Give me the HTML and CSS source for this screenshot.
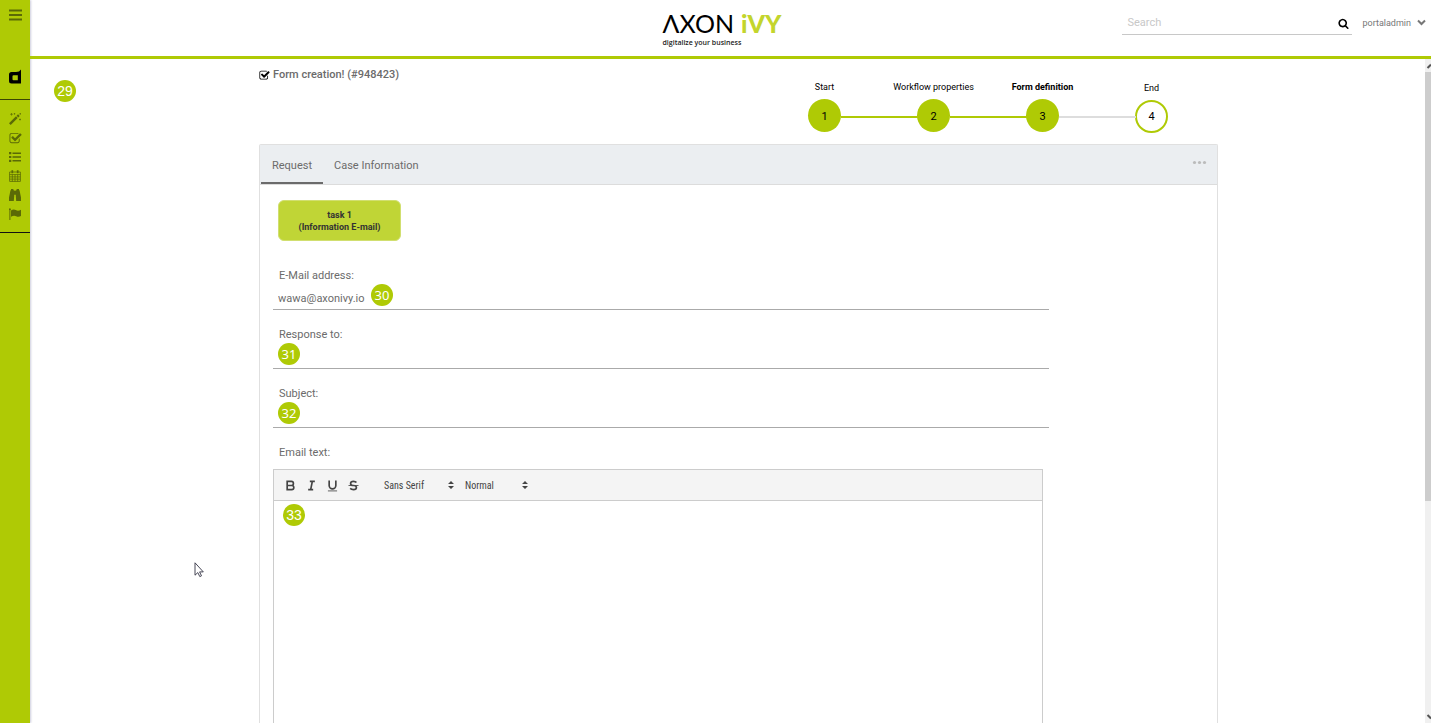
FILE: index.html
```
<!DOCTYPE html>
<html lang="en">
<head>
<meta charset="utf-8">
<title>Form creation</title>
<link rel="stylesheet" href="styles.css">
</head>
<body>
<div class="app">
  <nav class="sidebar" aria-label="Main">
    <button class="side-btn menu" type="button" aria-label="Menu">
      <svg width="14" height="12" viewBox="0 0 14 12"><path d="M1 1.500h13M1 6h13M1 10.500h13" stroke="currentColor" stroke-width="2"/></svg>
    </button>
    <a class="brand-mark" href="#" aria-label="Dashboard">
      <svg width="14" height="16" viewBox="0 0 14 16"><path fill="#000" fill-rule="evenodd" d="M13 .500V14.500H3.500Q1 14.500 1 12V5.500Q1 3 3.500 3H8Q11.500 3 13 .500zM5.500 6.200Q4.500 6.200 4.500 7.200V10.300Q4.500 11.300 5.500 11.300H9.800V6.200z"/></svg>
    </a>
    <div class="side-links">
      <a class="side-btn" href="#" aria-label="Processes"><svg width="12" height="12" viewBox="0 0 12 12"><path d="M0 10.300L7 3.300 8.700 5 1.700 12z" fill="currentColor"/><path d="M7.600 2.700L9 1.300 10.700 3 9.300 4.400z" fill="currentColor"/><path d="M2.500 0v2.600M1.200 1.300h2.600M5.500 0v1.600M4.700.8h1.600M11.300 0v1.600M10.500.8H12M11 5.500v2M10 6.500h2" stroke="currentColor" stroke-width=".7"/></svg></a>
      <a class="side-btn" href="#" aria-label="Tasks"><svg width="13" height="13" viewBox="0 0 1792 1792"><use href="#check"/></svg></a>
      <a class="side-btn" href="#" aria-label="Cases"><svg width="12" height="10" viewBox="0 0 12 10"><path d="M3.500 1.200H12M3.500 5H12M3.500 8.800H12" stroke="currentColor" stroke-width="1.500"/><path d="M0 1.200h2.300M0 5h2.300M0 8.800h2.300" stroke="currentColor" stroke-width="2.200"/></svg></a>
      <a class="side-btn" href="#" aria-label="Calendar"><svg width="12" height="12" viewBox="0 0 12 12"><path d="M.6 2h10.800v9.400H.6zM.6 4.600h10.800M.6 6.900h10.800M.6 9.100h10.800M3.300 4.500v7M6 4.500v7M8.700 4.500v7" fill="none" stroke="currentColor" stroke-width=".8"/><path d="M3.300.2v3M8.700.2v3" stroke="currentColor" stroke-width="1.700"/></svg></a>
      <a class="side-btn" href="#" aria-label="Search"><svg width="12" height="12" viewBox="0 0 12 12"><path d="M2 0h2.400v1.200H5.200V7L4.800 12H0V8.500L1.500 1.200H2zM7.600 0H10v1.200h.5L12 8.500V12H7.200L6.800 7V1.200h.8zM5 1.800h2v4H5z" fill="currentColor"/></svg></a>
      <a class="side-btn" href="#" aria-label="Flags"><svg width="12" height="12" viewBox="0 0 12 12"><path d="M.9 1v11" stroke="currentColor"/><circle cx=".9" cy="1.200" r=".9" fill="currentColor"/><path d="M2 2.600Q4.500.8 6.800 2.100T12 1.800V8Q9.500 9.500 7.200 8.200T2 8.800z" fill="currentColor"/></svg></a>
    </div>
  </nav>

  <header class="topbar">
    <div class="logo">
      <div class="logo-name"><span class="logo-axon">ΛXON</span><span class="logo-ivy">iVY</span></div>
      <div class="logo-tag">digitalize your business</div>
    </div>
    <div class="tools">
      <form class="search">
        <input type="text" aria-label="Search" placeholder="Search">
        <button type="button" aria-label="Run search"><svg width="11" height="11" viewBox="0 0 1792 1792"><path fill="currentColor" d="M1216 832q0-185-131.500-316.500t-316.500-131.500-316.500 131.500-131.500 316.500 131.500 316.500 316.500 131.500 316.500-131.500 131.500-316.500zm512 832q0 52-38 90t-90 38q-54 0-90-38l-343-342q-179 124-399 124-143 0-273.500-55.500t-225-150-150-225-55.500-273.500 55.500-273.500 150-225 225-150 273.500-55.500 273.500 55.500 225 150 150 225 55.500 273.500q0 220-124 399l343 343q37 37 37 90z"/></svg></button>
      </form>
      <button class="user" type="button">portaladmin
        <svg width="9" height="7" viewBox="0 0 9 7"><path d="M1 1.500L4.500 5 8 1.500" fill="none" stroke="currentColor" stroke-width="2"/></svg>
      </button>
    </div>
  </header>

  <div class="stage">
    <span class="note note-page">29</span>
    <main class="content">
      <div class="head">
        <h1 class="title"><svg width="11" height="11" viewBox="0 0 1792 1792"><path id="check" fill="currentColor" d="M1472 930v318q0 119-84.500 203.500t-203.500 84.500h-832q-119 0-203.500-84.500t-84.500-203.500v-832q0-119 84.500-203.500t203.500-84.500h832q63 0 117 25 15 7 18 23 3 17-9 29l-49 49q-10 10-23 10-3 0-9-2-23-6-45-6h-832q-66 0-113 47t-47 113v832q0 66 47 113t113 47h832q66 0 113-47t47-113v-254q0-13 9-22l64-64q10-10 23-10 6 0 12 3 20 8 20 29zm231-489l-814 814q-24 24-57 24t-57-24l-430-430q-24-24-24-57t24-57l110-110q24-24 57-24t57 24l263 263 647-647q24-24 57-24t57 24l110 110q24 24 24 57t-24 57z"/></svg>Form creation! (#948423)</h1>
        <ol class="steps">
          <li class="step"><span>Start</span><b class="dot">1</b></li>
          <li class="step linked"><span>Workflow properties</span><b class="dot">2</b></li>
          <li class="step linked current"><span>Form definition</span><b class="dot">3</b></li>
          <li class="step linked open"><span>End</span><b class="dot">4</b></li>
        </ol>
      </div>

      <section class="panel">
        <div class="tabs">
          <button class="tab active" type="button">Request</button>
          <button class="tab" type="button">Case Information</button>
          <button class="more" type="button" aria-label="More"><svg width="15" height="5" viewBox="0 0 15 5"><circle cx="2.500" cy="2.500" r="1.600"/><circle cx="7.500" cy="2.500" r="1.600"/><circle cx="12.500" cy="2.500" r="1.600"/></svg></button>
        </div>
        <form class="form">
          <button class="task" type="button">task 1<br>(Information E-mail)</button>
          <div class="field">
            <label for="mail">E-Mail address:</label>
            <input id="mail" type="text" value="wawa@axonivy.io">
            <span class="note note-mail">30</span>
          </div>
          <div class="field">
            <label for="reply">Response to:</label>
            <input id="reply" type="text">
            <span class="note note-field">31</span>
          </div>
          <div class="field">
            <label for="subject">Subject:</label>
            <input id="subject" type="text">
            <span class="note note-field">32</span>
          </div>
          <label class="editor-label" for="body">Email text:</label>
          <div class="editor">
            <div class="toolbar">
              <button type="button" aria-label="Bold"><svg width="15" height="15" viewBox="0 0 18 18"><path d="M5 4h5a2.500 2.500 0 0 1 0 5H5zM5 9h5.500a2.500 2.500 0 0 1 0 5H5z"/></svg></button>
              <button type="button" aria-label="Italic"><svg width="15" height="15" viewBox="0 0 18 18"><path d="M7 4h6M5 14h6M8 14l2-10"/></svg></button>
              <button type="button" aria-label="Underline"><svg width="15" height="15" viewBox="0 0 18 18"><path d="M5 3v6a4 4 0 0 0 8 0V3"/><path d="M3.500 15.500h11" stroke-width="1"/></svg></button>
              <button type="button" aria-label="Strike"><svg width="15" height="15" viewBox="0 0 18 18"><path d="M3 9h12" stroke-width="1"/><path d="M12.500 5.500Q11.500 4 9 4 5.500 4 5.500 6.500T9 9t3.500 2.500T9 14q-2.500 0-4-1.500"/></svg></button>
              <span class="pick pick-font"><select aria-label="Font"><option>Sans Serif</option></select><svg width="6" height="8" viewBox="0 0 6 8"><path d="M3 0l3 3H0zM0 5h6L3 8z"/></svg></span>
              <span class="pick pick-size"><select aria-label="Size"><option>Normal</option></select><svg width="6" height="8" viewBox="0 0 6 8"><path d="M3 0l3 3H0zM0 5h6L3 8z"/></svg></span>
            </div>
            <textarea id="body"></textarea>
            <span class="note note-editor">33</span>
          </div>
        </form>
      </section>
    </main>
    <div class="scroll" aria-hidden="true">
      <svg width="6" height="13" viewBox="0 0 6 13"><path d="M2.500 9L6 5.500" stroke="#555" stroke-width="2"/></svg>
      <div class="thumb"></div>
      <div class="track"></div>
      <svg width="6" height="13" viewBox="0 0 6 13"><path d="M2.500 5L6 8.500" stroke="#555" stroke-width="2"/></svg>
    </div>
    <svg class="pointer" width="10" height="16" viewBox="0 0 10 16"><path d="M1 .800v12.400l2.800-2.600 2 4 1.700-.8-1.900-3.900H9.300z" fill="#fff" stroke="#334" stroke-width=".9"/></svg>
  </div>
</div>
</body>
</html>
```
FILE: styles.css
```
* { box-sizing: border-box; }
body { margin: 0; font-family: Roboto, sans-serif; font-size: 11px; line-height: 16px; color: #6b6b6b; background: #fff; }
button, input, select, textarea { font: inherit; color: inherit; border: 0; margin: 0; padding: 0; background: none; border-radius: 0; outline: 0; }
svg { display: block; flex: none; }

.app { display: grid; grid-template-columns: 30px minmax(0, 1fr); grid-template-rows: auto minmax(0, 1fr); height: 100vh; overflow: hidden; }

.sidebar { grid-row: 1 / 3; background: #afca05; display: flex; flex-direction: column; color: #5b6a06; box-shadow: 1px 0 2px #ccd; }
.side-btn { display: flex; align-items: center; justify-content: center; width: 30px; color: #5b6a06; }
.menu { height: 30px; }
.brand-mark { display: flex; justify-content: center; align-items: flex-end; height: 70px; padding-bottom: 14px; border-bottom: 1px solid #3c4502; }
.side-links { display: grid; grid-auto-rows: 14px; gap: 5px; padding: 12px 0 11px; border-bottom: 1px solid #111; }

.topbar { display: grid; grid-template-columns: 1fr auto 1fr; border-bottom: 3px solid #afca05; height: 59px; padding-right: 5px; }
.logo { grid-column: 2; padding: 9px 12px 0 0; }
.logo-name { display: flex; gap: 7px; font-family: Lato, sans-serif; font-size: 25px; line-height: 29px; color: #000; }
.logo-ivy { font-weight: 900; color: #c3d52d; }
.logo-tag { font: 600 7px/9px "Open Sans", sans-serif; color: #222; }
.tools { display: flex; justify-content: flex-end; align-items: flex-start; gap: 10px; padding-top: 12px; }
.search { display: flex; align-items: center; width: 230px; height: 23px; padding: 0 3px 0 5px; border-bottom: 1px solid #c8c8c8; }
.search input { flex: 1; min-width: 0; }
.search input::placeholder { color: #c8c8c8; opacity: 1; }
.search button { color: #000; }
.user { display: flex; align-items: center; gap: 6px; height: 21px; font-size: 9px; color: #777; }

.stage { position: relative; display: flex; min-height: 0; overflow: hidden; }
.content { flex: 1; min-width: 0; display: flex; flex-direction: column; padding: 0 207px 0 229px; }
.head { display: flex; justify-content: space-between; height: 85px; }
.title { display: flex; align-items: center; gap: 3px; margin: 8px 0 0; height: 16px; font-size: 11px; font-weight: 500; }
.title svg { color: #000; }
.steps { list-style: none; display: grid; grid-template-columns: repeat(4, 109px); margin: 0; padding: 20px 12px 0 0; color: #000; font-size: 9px; }
.step { position: relative; display: flex; flex-direction: column; align-items: center; gap: 4px; }
.dot { display: flex; align-items: center; justify-content: center; width: 33px; height: 33px; padding-top: 2px; border-radius: 50%; background: #afca05; font-size: 11px; font-weight: 400; }
.current span { font-weight: 700; }
.linked::before { content: ""; position: absolute; top: 37px; right: calc(50% + 16px); width: 77px; height: 2px; background: #afca05; }
.open { padding-top: 1px; }
.open::before { background: #ddd; }
.open .dot { padding: 0; background: #fff; border: 2px solid #afca05; }

.panel { flex: 1; min-height: 0; display: flex; flex-direction: column; border: 1px solid #e0e0e0; border-bottom: 0; border-radius: 2px 2px 0 0; }
.tabs { display: flex; height: 40px; padding: 0 10px 0 1px; background: #ebeef1; border-bottom: 1px solid #dcdcdc; }
.tab { padding: 4px 11px 0; border-bottom: 2px solid transparent; }
.tab.active { border-color: #6b6b6b; }
.more { margin: 0 0 4px auto; fill: #bbb; }
.form { flex: 1; display: flex; flex-direction: column; align-items: flex-start; padding: 15px 13px 0; }
.task { width: 123px; height: 41px; margin: 0 0 19px 5px; border-radius: 6px; background: #c0d536; border: 1px solid #d1df70; color: #333; font-size: 9px; line-height: 12px; font-weight: 700; }
.field { position: relative; display: flex; flex-direction: column; width: 83.33%; height: 59px; }
.field label, .editor-label { padding: 8px 0 0 6px; }
.field input { height: 28px; margin-top: 4px; padding: 6px 5px 0; border-bottom: 1px solid #aaa; }
.field label { height: 18px; }
.editor-label { height: 32px; }
.editor { position: relative; flex: 1; width: calc(83.33% - 6px); display: flex; flex-direction: column; border: 1px solid #ccc; border-bottom: 0; }
.toolbar { display: flex; align-items: center; height: 31px; padding-left: 9px; gap: 6px; background: #f4f4f4; border-bottom: 1px solid #ccc; }
.toolbar button svg { fill: none; stroke: #444; stroke-width: 2; }
.pick { display: flex; align-items: center; color: #444; }
.pick select { flex: 1; min-width: 0; padding-top: 1px; appearance: none; font-family: "Liberation Sans Narrow", "Roboto Condensed", Roboto, sans-serif; font-size: 10px; }
.pick svg { fill: #444; pointer-events: none; }
.pick-font { width: 70px; margin-left: 17px; }
.pick-size { width: 63px; margin-left: 5px; }
.editor textarea { flex: 1; width: 100%; resize: none; padding: 8px; }

.note { position: absolute; width: 22px; height: 22px; border-radius: 50%; background: #afca05; color: #fff; text-align: center; font: 13px/22px "Noto Sans", sans-serif; }
.note-page { left: 24px; top: 21px; font-family: "Liberation Sans", sans-serif; font-size: 14px; }
.note-mail { left: 98px; top: 24px; }
.note-field { left: 5px; top: 24px; }
.note-editor { left: 9px; top: 34px; font-family: "Liberation Sans", sans-serif; font-size: 14px; }

.scroll { display: flex; flex-direction: column; width: 6px; background: #f0f0f0; }
.thumb { flex: 429; background: #cdcdcd; }
.track { flex: 209; }
.pointer { position: absolute; left: 164px; top: 503px; }
```
